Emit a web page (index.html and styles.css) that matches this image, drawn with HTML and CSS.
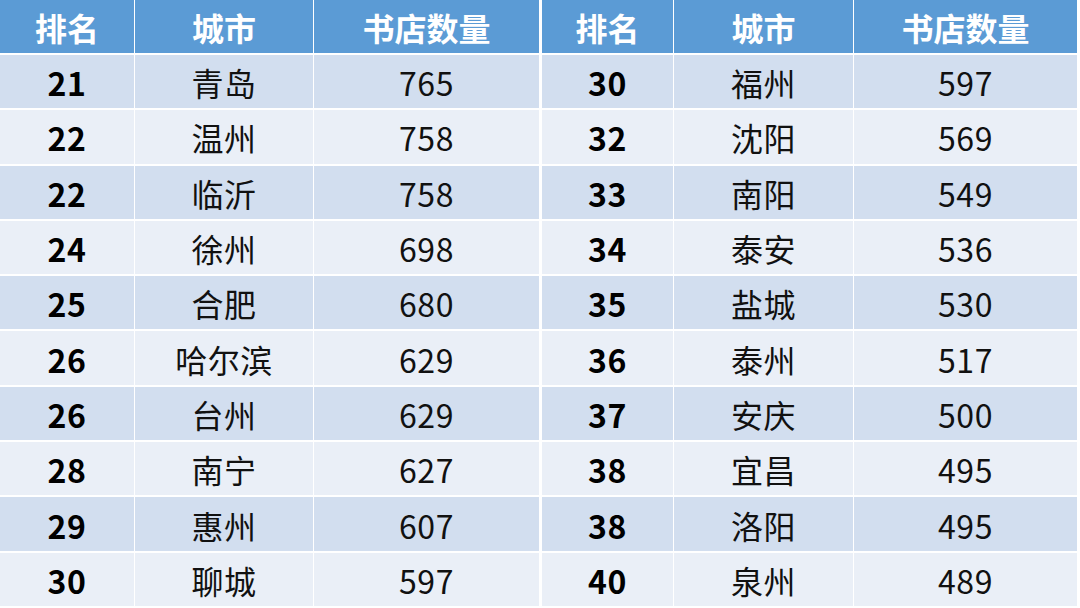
FILE: index.html
```html
<!DOCTYPE html>
<html lang="zh">
<head>
<meta charset="utf-8">
<title>书店数量排名</title>
<link rel="stylesheet" href="styles.css">
</head>
<body>
<div class="page">
  <div class="table left">
    <div class="th">排名</div><div class="th">城市</div><div class="th">书店数量</div>
    <div class="td rank a">21</div><div class="td a">青岛</div><div class="td a">765</div>
    <div class="td rank b">22</div><div class="td b">温州</div><div class="td b">758</div>
    <div class="td rank a">22</div><div class="td a">临沂</div><div class="td a">758</div>
    <div class="td rank b">24</div><div class="td b">徐州</div><div class="td b">698</div>
    <div class="td rank a">25</div><div class="td a">合肥</div><div class="td a">680</div>
    <div class="td rank b">26</div><div class="td b">哈尔滨</div><div class="td b">629</div>
    <div class="td rank a">26</div><div class="td a">台州</div><div class="td a">629</div>
    <div class="td rank b">28</div><div class="td b">南宁</div><div class="td b">627</div>
    <div class="td rank a">29</div><div class="td a">惠州</div><div class="td a">607</div>
    <div class="td rank b">30</div><div class="td b">聊城</div><div class="td b">597</div>
  </div>
  <div class="table right">
    <div class="th">排名</div><div class="th">城市</div><div class="th">书店数量</div>
    <div class="td rank a">30</div><div class="td a">福州</div><div class="td a">597</div>
    <div class="td rank b">32</div><div class="td b">沈阳</div><div class="td b">569</div>
    <div class="td rank a">33</div><div class="td a">南阳</div><div class="td a">549</div>
    <div class="td rank b">34</div><div class="td b">泰安</div><div class="td b">536</div>
    <div class="td rank a">35</div><div class="td a">盐城</div><div class="td a">530</div>
    <div class="td rank b">36</div><div class="td b">泰州</div><div class="td b">517</div>
    <div class="td rank a">37</div><div class="td a">安庆</div><div class="td a">500</div>
    <div class="td rank b">38</div><div class="td b">宜昌</div><div class="td b">495</div>
    <div class="td rank a">38</div><div class="td a">洛阳</div><div class="td a">495</div>
    <div class="td rank b">40</div><div class="td b">泉州</div><div class="td b">489</div>
  </div>
</div>
</body>
</html>
```
FILE: styles.css
```css
html, body {
  margin: 0;
  padding: 0;
  background: #ffffff;
}
.page {
  width: 1080px;
  height: 608px;
  display: flex;
  gap: 3px;
  background: #ffffff;
  font-family: "Noto Sans CJK SC", "Noto Sans", sans-serif;
}
.table {
  display: grid;
  grid-template-rows: 53px repeat(10, 53.3px);
  column-gap: 1px;
  row-gap: 2px;
}
.left {
  width: 539px;
  grid-template-columns: 134px 178px 225px;
}
.right {
  width: 535px;
  grid-template-columns: 131px 179px 223px;
}
.th, .td {
  display: flex;
  align-items: center;
  justify-content: center;
  font-size: 32px;
  line-height: 1;
  padding-top: 1px;
}
.th {
  background: #5b9bd5;
  color: #ffffff;
  font-weight: 700;
  padding-top: 0;
}
.td {
  color: #111111;
  font-weight: 400;
  letter-spacing: 0.5px;
}
.td.rank {
  font-weight: 700;
  color: #000000;
  font-size: 32px;
}
.a { background: #d2deef; }
.b { background: #eaeff7; }
```
